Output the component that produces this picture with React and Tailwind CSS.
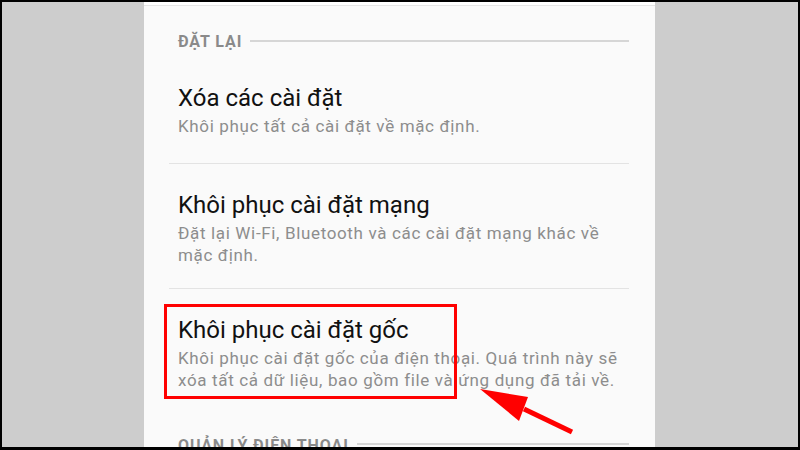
import React from "react";

const items = [
  {
    title: "Xóa các cài đặt",
    lines: ["Khôi phục tất cả cài đặt về mặc định."],
    pb: "pb-[25px] border-b border-[#e3e3e3]",
  },
  {
    title: "Khôi phục cài đặt mạng",
    lines: ["Đặt lại Wi-Fi, Bluetooth và các cài đặt mạng khác về", "mặc định."],
    pb: "pb-[21px] border-b border-[#e3e3e3]",
  },
  {
    title: "Khôi phục cài đặt gốc",
    lines: [
      "Khôi phục cài đặt gốc của điện thoại. Quá trình này sẽ",
      "xóa tất cả dữ liệu, bao gồm file và ứng dụng đã tải về.",
    ],
    pb: "pb-0",
  },
];

function SectionHeader({ label }) {
  return (
    <div className="flex items-center h-[20px] gap-[8px] pl-[9px]">
      <span className="text-[16px] font-bold tracking-[0.9px] text-[#8a8a8a] whitespace-nowrap leading-[20px]">
        {label}
      </span>
      <div className="flex-1 h-[2px] bg-[#d6d6d6] -mt-[3px]" />
    </div>
  );
}

export default function App() {
  return (
    <div className="relative w-[800px] h-[450px] bg-black pt-[2px] px-[2px] pb-[3px] overflow-hidden font-['Roboto',sans-serif]">
      <div className="w-full h-full bg-[#cdcdcd] flex">
        <div className="ml-[142px] w-[511px] h-full bg-[#fafafa] overflow-hidden">
          <div className="h-[3px] bg-white" />
          <div className="h-[1px] bg-[#e6e6e6]" />
          <div className="ml-[25px] w-[460px] mt-[26px]">
            <SectionHeader label="ĐẶT LẠI" />
            <div className="mt-[5px]">
              {items.map((it) => (
                <div key={it.title} className={`pt-[26px] pl-[9px] pr-[4px] ${it.pb}`}>
                  <div className="text-[24px] leading-[30px] text-[#111111] whitespace-nowrap">
                    {it.title}
                  </div>
                  <div className="mt-[2px] text-[17px] leading-[22.5px] tracking-[0.65px] text-[#8d8d8d]">
                    {it.lines.map((l) => (
                      <div key={l} className="whitespace-nowrap">{l}</div>
                    ))}
                  </div>
                </div>
              ))}
            </div>
            <div className="mt-[44px]">
              <SectionHeader label="QUẢN LÝ ĐIỆN THOẠI" />
            </div>
          </div>
        </div>
      </div>

      <div className="absolute left-[164px] top-[304px] w-[293px] h-[95px] border-[3px] border-[#ff0000]" />

      <svg className="absolute inset-0 pointer-events-none" width="800" height="450" viewBox="0 0 800 450">
        <line x1="524" y1="409" x2="572" y2="432" stroke="#ff0000" strokeWidth="5" />
        <polygon points="480,389 528,397 519,421" fill="#ff0000" />
      </svg>
    </div>
  );
}
